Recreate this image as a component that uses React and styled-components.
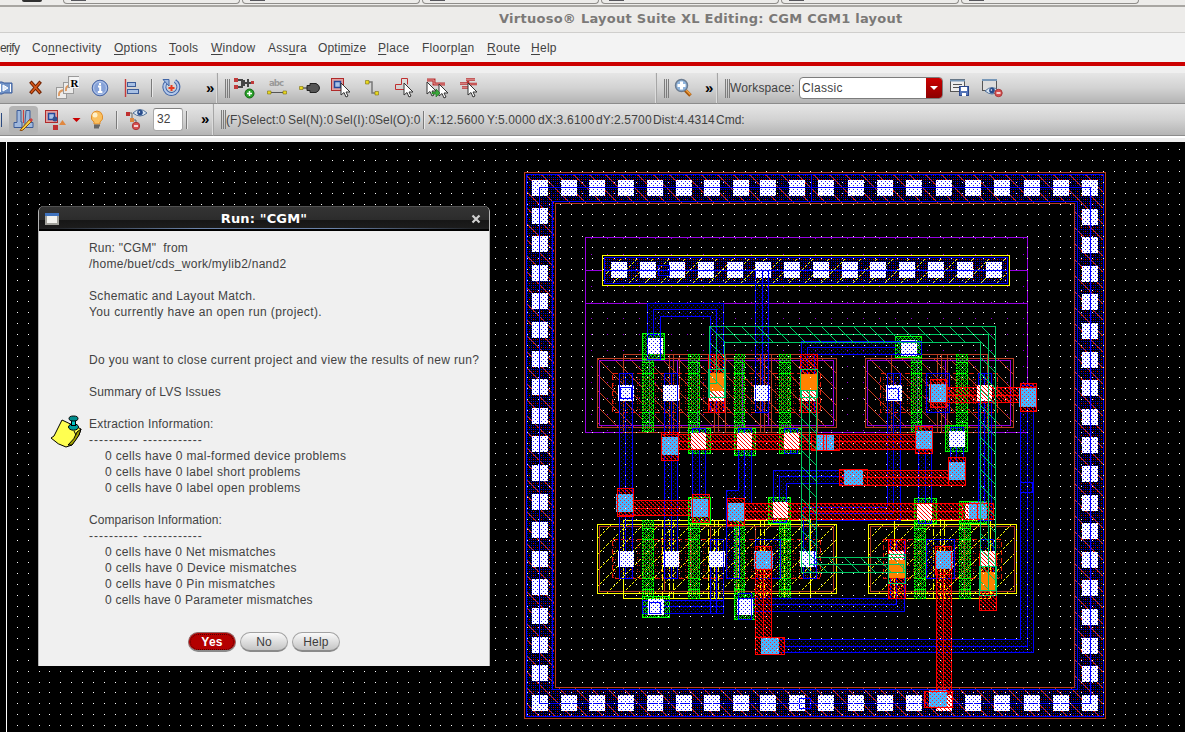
import React from 'react';
import styled, { createGlobalStyle, css } from 'styled-components';

const Global = createGlobalStyle`
  html, body { margin: 0; padding: 0; overflow: hidden; background: #000; }
  * { box-sizing: border-box; }
`;

const Screen = styled.div`
  position: relative;
  width: 1185px;
  height: 732px;
  overflow: hidden;
  display: flex;
  flex-direction: column;
  font: 12px/16px 'Liberation Sans', Arial, sans-serif;
  color: #424242;
  background: #f0f0f0;
`;

const Taskbar = styled.div`
  height: 7px;
  display: flex;
  gap: 2px;
  flex: none;
  background: #edecea;
  border-bottom: 2px solid #a8a6a2;
`;
const TaskTab = styled.div`
  width: ${p => p.$w}px;
  height: 4px;
  flex: none;
  border: 1px solid #8f8d8a;
  border-top: 0;
  border-radius: 0 0 4px 4px;
  padding-left: 7px;
`;
const TaskGlyph = styled.div`
  width: 15px;
  height: 1px;
  background: #56565c;
`;
const TaskGrip = styled.div`
  width: 61px;
  height: 3px;
  flex: none;
  padding-left: 22px;
`;
const TaskMark = styled.div`
  width: 20px;
  height: 2px;
  background: #303030;
  border-radius: 0 0 3px 3px;
`;

const TitleBar = styled.div`
  height: 26px;
  flex: none;
  background: #edecea;
  border-bottom: 1px solid #cfcecc;
  padding-left: 499px;
  font: bold 13px/24px 'DejaVu Sans', sans-serif;
  letter-spacing: 0.26px;
  color: #7b7977;
  white-space: pre;
`;

const MenuBar = styled.nav`
  height: 29px;
  flex: none;
  display: flex;
  align-items: center;
  background: #f3f3f3;
  overflow: hidden;
`;
const MenuItem = styled.span`
  width: ${p => p.$w}px;
  flex: none;
  white-space: nowrap;
  letter-spacing: ${p => p.$ls ?? 0.27}px;
  u { text-decoration-thickness: 1px; text-underline-offset: 2px; text-decoration-skip-ink: none; }
`;
const RedRule = styled.div`
  height: 4px;
  flex: none;
  background: #cc0000;
`;

const ToolRow = styled.div`
  height: ${p => p.$h}px;
  flex: none;
  display: flex;
`;
const barFill = css`
  background: linear-gradient(#e6e6e6, #d2d2d2 50%, #b4b4b4);
  border-bottom: 1px solid #8c8c8c;
`;
const ToolSection = styled.div`
  ${barFill}
  width: ${p => (p.$w ? `${p.$w}px` : 'auto')};
  flex: ${p => (p.$w ? 'none' : 1)};
  display: flex;
  align-items: center;
  border-right: ${p => (p.$w ? '1px solid #a6a6a6' : 0)};
  box-shadow: ${p => (p.$w ? 'inset -1px 0 #dcdcdc' : 'none')};
  overflow: hidden;
`;
const Spacer = styled.div`
  height: ${p => p.$h}px;
  flex: none;
  background: ${p => p.$bg || '#f0f0f0'};
`;
const Icon = styled.svg`
  flex: none;
  display: block;
  margin-left: ${p => p.$ml || 0}px;
`;
const Grip = styled.div`
  flex: none;
  width: 5px;
  height: 19px;
  margin-left: 7px;
  border-left: 1px solid #7c7c7c;
  border-right: 1px solid #7c7c7c;
  background: linear-gradient(90deg, transparent 1px, #7c7c7c 1px, #7c7c7c 2px, transparent 2px);
`;
const Rule = styled.div`
  flex: none;
  width: 2px;
  height: 18px;
  margin-left: ${p => p.$ml}px;
  background: #7a7a7a;
  border-right: 1px solid #e8e8e8;
`;
const More = styled.span`
  flex: none;
  width: 10px;
  margin-left: ${p => p.$ml}px;
  padding-bottom: 2px;
  font: bold 15px/17px 'Liberation Sans', sans-serif;
  color: #000;
`;
const Status = styled.span`
  flex: none;
  width: ${p => p.$w}px;
  letter-spacing: ${p => p.$ls || 0}px;
  margin-left: ${p => p.$ml || 0}px;
  white-space: nowrap;
`;
const Toggle = styled.div`
  flex: none;
  width: 29px;
  height: 28px;
  margin-left: 7px;
  border-radius: 4px;
  background: #b4b4b4;
  display: flex;
  align-items: center;
  justify-content: center;
`;
const LeftBar = styled.div`
  flex: none;
  width: 1px;
  height: 14px;
  margin-left: 1px;
  background: #2c4a80;
`;
const NumberBox = styled.div`
  flex: none;
  width: 30px;
  height: 23px;
  margin-left: 4px;
  padding-left: 3px;
  border: 1px solid #a8a8a8;
  border-top-color: #808080;
  border-radius: 3px;
  background: #fff;
  line-height: 21px;
`;
const Combo = styled.div`
  flex: none;
  width: 144px;
  height: 22px;
  margin-left: 4px;
  display: flex;
  border: 1px solid #7c7c7c;
  border-radius: 4px;
  background: #fff;
  overflow: hidden;
`;
const ComboText = styled.span`
  flex: 1;
  padding-left: 2px;
  line-height: 21px;
  letter-spacing: 0.3px;
`;
const ComboArrow = styled.div`
  width: 16px;
  display: flex;
  align-items: center;
  justify-content: center;
  background: linear-gradient(#cc0000, #8c0000);
`;

const Dialog = styled.section`
  position: absolute;
  left: 38px;
  top: 206px;
  width: 452px;
  height: 460px;
  display: flex;
  flex-direction: column;
  border-radius: 6px 6px 0 0;
  background: #f0f0f0;
  border: 1px solid #b4b4b4;
  border-top: 0;
  border-bottom: 0;
  overflow: hidden;
`;
const DialogTitle = styled.header`
  height: 25px;
  flex: none;
  display: flex;
  align-items: center;
  padding: 0 9px 0 7px;
  margin: 0 -1px;
  background: linear-gradient(#6b6b6b 0, #343434 1px, #2c2c2c 55%, #161616 56%, #1c1c1c 22px, transparent 22px, transparent 23px, #000 23px),
    linear-gradient(90deg, #1c1c1c, #6a82a8 35%, #6a82a8 65%, #1c1c1c);
`;
const DialogName = styled.div`
  flex: 1;
  text-align: center;
  font: bold 13px/20px 'DejaVu Sans', sans-serif;
  letter-spacing: 0.15px;
  padding-right: 2px;
  color: #fff;
`;
const DialogBody = styled.div`
  flex: 1;
  display: flex;
`;
const NoteColumn = styled.div`
  width: 50px;
  padding: 184px 0 0 11px;
  flex: none;
`;
const Message = styled.div`
  padding-top: 9px;
  flex: 1;
  display: flex;
  flex-direction: column;
`;
const Line = styled.div`
  height: 16px;
  line-height: 16px;
  white-space: pre;
  letter-spacing: ${p => p.$ls ?? 0.2}px;
  padding-left: ${p => (p.$in ? 16 : 0)}px;
`;
const Buttons = styled.div`
  display: flex;
  gap: 4px;
  height: 21px;
  margin: 24px 0 0 99px;
`;
const Button = styled.button`
  width: 48px;
  height: 20px;
  padding: 0;
  border: 1px solid ${p => (p.$main ? '#8f6b6b' : '#a2a2a2')};
  border-bottom: 2px solid #8a8a8a;
  border-radius: 10px;
  font: ${p => (p.$main ? 'bold' : 'normal')} 12px/16px 'Liberation Sans', sans-serif;
  letter-spacing: 0.2px;
  color: ${p => (p.$main ? '#fff' : '#3c3c3c')};
  background: ${p => (p.$main ? '#b40000' : 'linear-gradient(#fafafa, #c4c4c4)')};
  outline: ${p => (p.$main ? '1px dotted #500000' : 'none')};
  outline-offset: -3px;
`;

const Canvas = styled.main`
  flex: 1;
  background: #000;
  min-height: 0;
`;
const Drawing = styled.svg`
  display: block;
  shape-rendering: crispEdges;
`;

/* ---------- layout drawing ---------- */
const BLUE = '#0000ff', BROWN = '#b93c23', PURPLE = '#9600e1', TEAL = '#00c864';
const RED = '#ff0000', GREEN = '#00ff00', YELLOW = '#ffff00', SKY = '#46b4ff', ORANGE = '#ff8200';

const Box = ({ b, c, fill = 'none', dash }) => (
  <rect x={b[0] + 0.5} y={b[1] + 0.5} width={b[2] - b[0]} height={b[3] - b[1]} stroke={c} fill={fill} strokeDasharray={dash} />
);
const Fill = ({ b, fill }) => <rect x={b[0]} y={b[1]} width={b[2] - b[0]} height={b[3] - b[1]} fill={fill} />;
const V = ({ x, a, b, c, dash }) => <path d={`M${x + 0.5} ${a}V${b}`} stroke={c} strokeDasharray={dash} />;
const H = ({ y, a, b, c }) => <path d={`M${a} ${y + 0.5}H${b}`} stroke={c} />;

const Dots = ({ id, size, pts, c }) => (
  <pattern id={id} width={size} height={size} patternUnits="userSpaceOnUse">
    {pts.map(([x, y], i) => <rect key={i} x={x} y={y} width="1" height="1" fill={c} />)}
  </pattern>
);
const diag = (n, f, keep = () => true) =>
  Array.from({ length: n }, (_, i) => i).filter(keep).map(i => [i, f(i)]);

/* a routed segment: outline, stipple, and its centre line at m */
const Wire = ({ b, m, c = BLUE, fill = 'url(#blueDots)', vert }) => (
  <g>
    <Box b={b} c={c} fill={fill} />
    {vert ? <V x={m} a={b[1]} b={b[3]} c={c} /> : <H y={m} a={b[0]} b={b[2]} c={c} />}
  </g>
);
const Pad = ({ x, y, w = 16, h = 16, red }) => (
  <g>
    <rect x={x} y={y} width={w} height={h} fill="#fff" />
    <rect x={x} y={y} width={w} height={h} fill="url(#padDots)" />
    {red && <rect x={x} y={y} width={w} height={h} fill="url(#redHatch)" />}
  </g>
);
const Via = ({ r, p }) => (
  <g>
    <Box b={r} c={RED} fill="url(#redDots)" />
    <Fill b={p} fill={SKY} />
    <Fill b={p} fill="url(#redSparse)" />
    <Box b={r} c={RED} />
  </g>
);

const topX = [532, 561, 589, 618, 647, 676, 704, 733, 760, 789, 818, 848, 877, 906, 936, 965, 994, 1024, 1053, 1082];
const barX = [611, 640, 669, 698, 727, 755, 784, 813, 842, 870, 899, 928, 957, 986];
const gridDots = [];
for (let n = -3; n < 106; n++) for (let m = -2; m < 52; m++) gridDots.push([Math.floor(39 + 10.862 * n), Math.floor(171.45 + 10.864 * m)]);

const LayoutView = () => (
  <Drawing width="1185" height="590" viewBox="0 142 1185 590" fill="none" strokeWidth="1">
    <defs>
      <Dots id="blueDots" size={4} pts={[[1, 1], [3, 3]]} c="#0000c8" />
      <Dots id="ringBlue" size={4} pts={[[1, 1], [3, 3], [3, 1]]} c="#0000dc" />
      <Dots id="ringRed" size={8} pts={[[1, 3], [5, 7], [5, 3]]} c="#d20000" />
      <Dots id="padDots" size={4} pts={[[1, 1], [3, 3]]} c="#1414ff" />
      <Dots id="redDots" size={4} pts={[[0, 0], [1, 0], [2, 2], [3, 2], [1, 1], [3, 3]]} c="#e60000" />
      <Dots id="redSparse" size={4} pts={[[0, 0], [2, 2]]} c="#ff2828" />
      <Dots id="diffDots" size={6} pts={[[1, 1], [3, 1], [1, 5]]} c="#c81e0a" />
      <Dots id="redHatch" size={4} pts={[[0, 0], [1, 1], [2, 2], [3, 3]]} c="#ff0000" />
      <Dots id="greenDots" size={4} pts={[[1, 0], [3, 0], [0, 1], [1, 2], [3, 2], [2, 3]]} c="#00f000" />
      <Dots id="brownHatch" size={16} pts={diag(16, i => (i + 1) % 16)} c="#c83c1e" />
      <Dots id="tealHatch" size={16} pts={diag(16, i => (i + 1) % 16)} c={TEAL} />
      <Dots id="yellowHatch" size={16} pts={diag(16, i => 15 - i, i => i % 3 !== 1)} c={YELLOW} />
      <Dots id="wellDots" size={16} pts={[[15, 14]]} c="#9600e1" />
    </defs>

    {['url(#ringBlue)', 'url(#ringRed)', 'url(#brownHatch)'].map(f => (
      <path key={f} fillRule="evenodd" fill={f} d="M526 174H1104V717H526ZM554 203V688H1075V203Z" />
    ))}
    <Fill b={[586, 238, 1027, 432]} fill="url(#wellDots)" />
    <Box b={[524, 172, 1105, 718]} c={BROWN} />
    <Box b={[555, 203, 1074, 687]} c={BROWN} />
    <Box b={[526, 174, 1103, 716]} c={BLUE} />
    <Box b={[552, 201, 1077, 689]} c={BLUE} />
    {topX.map(x => <g key={x}><Pad x={x} y={180} /><Pad x={x} y={695} /></g>)}
    {Array.from({ length: 17 }, (_, i) => i + 1).map(i => (
      <g key={i}><Pad x={532} y={Math.floor(180 + 28.6 * i - 0.6)} /><Pad x={1082} y={Math.round(180 + 28.6 * i)} /></g>
    ))}
    <Box b={[539, 187, 1090, 703]} c={BLUE} />
    <V x={811} a={174} b={202} c={BLUE} />
    <Box b={[799, 698, 810, 708]} c={BLUE} />

    <Box b={[585, 237, 1027, 432]} c={PURPLE} />
    <H y={303} a={585} b={1027} c={PURPLE} />
    <H y={270} a={585} b={1027} c={PURPLE} />
    <Box b={[602, 255, 1009, 285]} c={YELLOW} fill="#000" />
    <Fill b={[604, 257, 1008, 284]} fill="url(#ringBlue)" />
    <Fill b={[604, 257, 1008, 284]} fill="url(#ringRed)" />
    <Fill b={[604, 257, 1008, 284]} fill="url(#yellowHatch)" />
    <Box b={[604, 257, 1007, 283]} c={BLUE} />
    {barX.map(x => <Pad key={x} x={x} y={262} />)}
    <H y={270} a={604} b={1008} c={BLUE} />
    <Box b={[658, 265, 669, 275]} c={BLUE} />

    {/* wells and diffusions */}
    {[[597, 836, 599, 833, 623, 817], [865, 1013, 867, 1010, 891, 987]].map(([a, b, c, d, e, f]) => (
      <g key={a}>
        <Box b={[a, 358, b, 427]} c={BROWN} fill="url(#brownHatch)" />
        <Box b={[c, 360, d, 425]} c={PURPLE} />
        <Box b={[e, 354, f, 432]} c={BROWN} />
      </g>
    ))}
    {[669, 673, 679, 714, 718, 725, 760, 764, 771, 937, 941, 947].map(x => <V key={x} x={x} a={354} b={432} c={BROWN} />)}
    {[649, 677, 697, 742, 768, 917, 945].map(x => <V key={x} x={x} a={360} b={426} c={PURPLE} />)}
    <Box b={[612, 373, 820, 412]} c="#e61e0a" fill="url(#diffDots)" dash="5 3" />
    <Box b={[880, 373, 997, 412]} c="#e61e0a" fill="url(#diffDots)" dash="5 3" />

    {[[597, 836, 599, 833, 623, 810], [868, 1016, 870, 1014, 894, 990]].map(([a, b, c, d, e, f]) => (
      <g key={a}>
        <Box b={[a, 524, b, 593]} c={YELLOW} fill="url(#yellowHatch)" />
        <Box b={[c, 526, d, 591]} c={BROWN} />
        <Box b={[e, 520, f, 598]} c={YELLOW} />
      </g>
    ))}
    {[662, 669, 673, 708, 714, 718, 738, 760, 764, 784, 933, 940, 944].map(x => <V key={x} x={x} a={520} b={598} c={YELLOW} dash="7 2" />)}
    {[664, 690, 710, 736, 755, 964].map(x => <V key={x} x={x} a={526} b={592} c={BROWN} />)}
    <Box b={[612, 539, 820, 578]} c="#e61e0a" fill="url(#diffDots)" dash="5 3" />
    <Box b={[883, 539, 1001, 578]} c="#e61e0a" fill="url(#diffDots)" dash="5 3" />

    {/* poly */}
    {[[642, 653], [688, 699], [734, 744], [779, 790], [911, 921], [956, 967]].map(([a, b]) => (
      <g key={a}>
        <Box b={[a, 354, b, 431]} c={GREEN} fill="url(#greenDots)" dash="2 1" />
        {[362, 373, 412, 422].map(y => <H key={y} y={y} a={a} b={b} c={GREEN} />)}
      </g>
    ))}
    {[[642, 653], [688, 699], [734, 744], [779, 790], [914, 925], [959, 970]].map(([a, b]) => (
      <g key={a}>
        <Box b={[a, 520, b, 598]} c={GREEN} fill="url(#greenDots)" dash="2 1" />
        {[528, 539, 578, 589].map(y => <H key={y} y={y} a={a} b={b} c={GREEN} />)}
      </g>
    ))}
    {[[642, 333, 664, 359], [895, 336, 921, 357], [688, 428, 710, 453], [734, 428, 755, 455], [779, 428, 801, 453], [945, 425, 967, 451],
      [688, 497, 710, 523], [768, 497, 790, 523], [914, 498, 936, 523], [959, 501, 986, 523], [642, 596, 669, 617], [734, 593, 755, 619]].map(b => (
      <Box key={b.join()} b={b} c={GREEN} fill="url(#greenDots)" />
    ))}

    {/* first metal */}
    <path fill="url(#blueDots)" stroke={BLUE} d="M647.5 359.5V303.5H723.5V412.5H710.5V316.5H660.5V359.5Z" />
    <path stroke={BLUE} d="M653.5 340V309.5H716.5V412" />
    <Wire vert m={762} b={[755, 270, 768, 412]} />
    <path fill="url(#blueDots)" stroke={BLUE} d="M921.5 341.5H801.5V412.5H814.5V354.5H921.5Z" />
    <path stroke={BLUE} d="M895 347.5H807.5V412" />
    <Wire vert m={625} b={[619, 373, 632, 578]} />
    <Wire vert m={671} b={[664, 373, 677, 578]} />
    <Wire vert m={699} b={[692, 428, 705, 522]} />
    <Wire vert m={790} b={[784, 428, 797, 453]} />
    <path fill="url(#blueDots)" stroke={BLUE} d="M738.5 428.5H751.5V503.5H739.5V578.5H726.5V490.5H738.5Z" />
    <V x={744} a={428} b={500} c={BLUE} />
    <path fill="url(#blueDots)" stroke={BLUE} d="M773.5 522.5V470.5H848.5V483.5H786.5V522.5Z" />
    <path stroke={BLUE} d="M779.5 500V476.5H848" />
    <path fill="url(#blueDots)" stroke={BLUE} d="M887.5 373.5H900.5V520.5H816.5V578.5H803.5V507.5H887.5Z" />
    <path stroke={BLUE} d="M893.5 373V513.5H809.5" />
    <Wire vert m={925} b={[918, 426, 931, 523]} />
    <Wire vert m={956} b={[950, 427, 963, 478]} />
    <Wire vert m={984} b={[978, 373, 991, 520]} />
    <Box b={[926, 373, 949, 412]} c={BLUE} fill="url(#blueDots)" />
    <Box b={[926, 539, 954, 578]} c={BLUE} fill="url(#blueDots)" />
    <Box b={[980, 539, 993, 578]} c={BLUE} fill="url(#blueDots)" />
    <Wire vert m={716} b={[710, 539, 723, 613]} />
    <Wire m={606} b={[642, 600, 723, 613]} />
    <path fill="url(#blueDots)" stroke={BLUE} d="M738.5 598.5H890.5V539.5H904.5V611.5H738.5Z" />
    <path stroke={BLUE} d="M738 604.5H896.5V540" />
    <Box b={[755, 539, 780, 578]} c={BLUE} fill="url(#blueDots)" />
    <path fill="url(#blueDots)" stroke={BLUE} d="M762.5 639.5H1020.5V385.5H1033.5V652.5H762.5Z" />
    <path stroke={BLUE} d="M762 646.5H1027.5V385" />
    <Box b={[1020, 482, 1032, 492]} c={BLUE} />

    {/* contact pads */}
    {[[647, 338], [901, 340], [618, 385], [663, 385], [754, 385], [886, 385], [949, 431], [618, 551], [663, 551], [709, 551], [800, 551], [648, 599], [737, 599]].map(([x, y]) => (
      <Pad key={x + '-' + y} x={x} y={y} />
    ))}
    {[619, 632, 677, 755, 768, 887].map(x => <V key={x} x={x} a={385} b={401} c={BLUE} />)}
    {[619, 664, 723, 801, 814].map(x => <V key={x} x={x} a={551} b={567} c={BLUE} />)}
    {[[620, 387, 631, 398], [887, 388, 898, 399], [649, 602, 660, 613], [738, 593, 751, 619], [647, 334, 660, 359]].map(b => (
      <Box key={b.join()} b={b} c={BLUE} />
    ))}
    <H y={341} a={895} b={921} c={BLUE} />
    <H y={354} a={895} b={921} c={BLUE} />

    {/* second metal */}
    {[[664, 434, 931, 449, 441], [932, 387, 1035, 402, 395], [839, 470, 965, 485, 477], [619, 500, 708, 515, 508], [727, 503, 993, 519, 511]].map(b => (
      <Wire key={b.join()} b={b} m={b[4]} c={RED} fill="url(#redDots)" />
    ))}
    {[[691, 433], [737, 433], [784, 433], [977, 385], [773, 502], [917, 504], [965, 503]].map(([x, y]) => (
      <Pad key={x + '-' + y} x={x} y={y} w={15} red />
    ))}
    <Wire vert m={763} b={[755, 569, 771, 654]} c={RED} fill="url(#redDots)" />
    <Wire vert m={943} b={[936, 565, 951, 698]} c={RED} fill="url(#redDots)" />
    <Via r={[661, 432, 678, 460]} p={[662, 437, 678, 455]} />
    <Via r={[915, 426, 932, 453]} p={[916, 431, 932, 449]} />
    <Via r={[811, 434, 839, 450]} p={[816, 434, 834, 450]} />
    <V x={823} a={434} b={450} c={RED} />
    <V x={826} a={434} b={450} c={RED} />
    <Via r={[930, 379, 946, 407]} p={[929, 384, 946, 402]} />
    <Via r={[1020, 383, 1036, 411]} p={[1019, 388, 1036, 407]} />
    <Via r={[839, 469, 867, 485]} p={[844, 470, 863, 486]} />
    <Via r={[948, 457, 965, 485]} p={[949, 462, 966, 480]} />
    <Via r={[617, 488, 633, 516]} p={[616, 494, 634, 512]} />
    <Via r={[692, 494, 709, 522]} p={[691, 499, 708, 517]} />
    <Via r={[727, 498, 744, 525]} p={[727, 503, 744, 521]} />
    <Via r={[962, 503, 993, 519]} p={[969, 502, 987, 519]} />
    <V x={977} a={503} b={519} c={RED} />
    <Via r={[755, 546, 771, 574]} p={[754, 551, 773, 569]} />
    <Via r={[755, 637, 784, 654]} p={[761, 638, 779, 654]} />
    <Via r={[935, 546, 951, 574]} p={[936, 551, 953, 569]} />
    <Pad x={936} y={695} red />
    <Via r={[924, 691, 952, 707]} p={[929, 690, 947, 707]} />

    {[[708, 354, 724, 412, 391, 401, 373, 391], [800, 354, 817, 412, 391, 401, 374, 390], [888, 539, 905, 598, 551, 560, 560, 578], [979, 553, 996, 610, 551, 567, 572, 590]].map(r => (
      <g key={r[0]}>
        <Box b={r.slice(0, 4)} c={RED} fill="url(#redDots)" />
        <Pad x={r[0] + 1} y={r[4]} w={15} h={r[5] - r[4]} red />
        <Fill b={[r[0] + 1, r[6], r[2], r[7]]} fill={ORANGE} />
      </g>
    ))}

    {/* third metal */}
    <path fill="url(#tealHatch)" stroke={TEAL} d="M709.5 397.5V326.5H995.5V590.5H980.5V342.5H724.5V397.5Z" />
    <path stroke={TEAL} d="M709 383.5H716.5V334.5H988.5V590" />
    <path fill="url(#tealHatch)" stroke={TEAL} d="M801.5 390.5H816.5V557.5H905.5V572.5H801.5Z" />
    <path stroke={TEAL} d="M809.5 390V564.5H903.5V572" />
    {[[708, 369, 725, 397], [800, 369, 817, 397], [888, 554, 905, 583], [979, 566, 996, 595]].map(b => <Box key={b.join()} b={b} c={TEAL} />)}

    <path fill="#fff" d={gridDots.map(([x, y]) => `M${x} ${y}h1v1h-1z`).join('')} />
    <rect x="0" y="142" width="6" height="590" fill="#000" />
    <rect x="6" y="142" width="1" height="590" fill="#fff" />
  </Drawing>
);

/* ---------- toolbar icons ---------- */
const Cursor = ({ x, y }) => (
  <path transform={`translate(${x} ${y})`} d="M0 0V12L3 9.5L5 14L7 13L5 9H9Z" fill="#fff" stroke="#333" strokeWidth="1" />
);
const BluePad = ({ x, y }) => (
  <g transform={`translate(${x} ${y})`}>
    <rect x=".5" y=".5" width="12" height="12" fill="#e0a0a0" stroke="#b02a2a" />
    <rect x="3.5" y="3.5" width="6" height="6" fill="#a8c2e8" stroke="#24489a" strokeWidth="1.5" />
  </g>
);
const Eye = ({ x, y }) => (
  <g transform={`translate(${x} ${y})`}>
    <path d="M0 4Q7-3 14 4Q7 10 0 4Z" fill="#d8e4f2" stroke="#54749c" />
    <circle cx="7" cy="3.6" r="2.8" fill="#284c8c" /><circle cx="6.4" cy="3" r=".8" fill="#fff" />
  </g>
);
const Minus = ({ x, y }) => (
  <g><circle cx={x} cy={y} r="3.7" fill="#d65050" stroke="#a83838" /><path d={`M${x - 2} ${y}h4`} stroke="#fff" strokeWidth="1.5" /></g>
);

const FirstRow = () => (
  <ToolRow $h={31}>
    <ToolSection $w={218}>
      <Icon width="13" height="16" viewBox="0 0 13 16"><path d="M-4 2H2L4 3H12V13H4L2 14H-4Z" fill="#7294c8" stroke="#3a5c9c" /><path d="M0.500 4V12M3 5V11L8 8ZM10.500 4V12" stroke="#fff" fill="#dce8f8" /></Icon>
      <Icon $ml={15} width="15" height="16" viewBox="0 0 15 16"><path d="M3.500 3L11.500 12M11.500 3L3.500 12" stroke="#6c2000" strokeWidth="3.400" strokeLinecap="square" /><path d="M3.500 3L11.500 12M11.500 3L3.500 12" stroke="#d4571a" strokeWidth="1.600" strokeLinecap="square" /></Icon>
      <Icon $ml={13} width="25" height="26" viewBox="0 0 25 26">
        {[[0, 12], [7, 7], [12, 1]].map(([x, y]) => <g key={x}><rect x={x + 0.5} y={y + 0.5} width="10" height="11" fill="#ecebea" stroke="#9a9a9a" /><path d={`M${x + 3} ${y + 9}Q${x + 2} ${y + 4} ${x + 8} ${y + 3}`} stroke="#dc9860" strokeWidth="2" fill="none" /></g>)}
        <rect x="14" y="2" width="9" height="11" fill="#f4f4f4" /><text x="14.500" y="11.500" fontSize="11" fontWeight="bold" fontFamily="Liberation Serif">R</text>
      </Icon>
      <Icon $ml={10} width="18" height="18" viewBox="0 0 18 18"><circle cx="9" cy="9" r="7.8" fill="#86a2d8" stroke="#4664a4" /><circle cx="9" cy="9" r="6.4" fill="none" stroke="#b8cbee" /><path d="M9 4v2M7 7.500h2.200v5M6.800 13h4.600" stroke="#fff" strokeWidth="2" fill="none" /></Icon>
      <Icon $ml={15} width="17" height="20" viewBox="0 0 17 20"><path d="M1.500 1V19" stroke="#c43c3c" strokeWidth="1.4" /><rect x="3.500" y="4.500" width="8" height="4" fill="#a8c0e4" stroke="#3c5c98" /><rect x="3.500" y="11.500" width="11" height="4" fill="#a8c0e4" stroke="#3c5c98" /></Icon>
      <Rule $ml={10} />
      <Icon $ml={9} width="19" height="20" viewBox="0 0 19 20"><path d="M4 4.500A7 7 0 1 0 13 3" stroke="#3f64a6" strokeWidth="4" fill="none" /><path d="M4 4.500A7 7 0 1 0 13 3" stroke="#b4c8ea" strokeWidth="2" fill="none" /><path d="M1 1.500H7V8Z" fill="#a0bae2" stroke="#3f64a6" /><path d="M9.500 7v6M6.500 10h6" stroke="#e83c20" strokeWidth="2" /></Icon>
      <More $ml={25}>»</More>
    </ToolSection>
    <ToolSection $w={439}>
      <Grip />
      <Icon $ml={4} width="21" height="22" viewBox="0 0 21 22"><path d="M4 3H8V10H4M14 2V10M14 6H19M10 3V9M10 6H14" stroke="#444" strokeWidth="2" fill="none" /><path d="M0 1h4v4H0zM0 8h4v4H0zM17 4h3v3h-3z" fill="#c03a3a" /><circle cx="15.500" cy="16.500" r="4.500" fill="#28a028" stroke="#126612" /><path d="M15.500 14v5M13 16.500h5" stroke="#fff" strokeWidth="1.500" /></Icon>
      <Icon $ml={12} width="21" height="20" viewBox="0 0 21 20"><text x="2" y="8" fontSize="8.500" fontWeight="bold" fontFamily="DejaVu Sans" fill="#999" textLength="15">abc</text><path d="M2 14.500H18" stroke="#555" /><path d="M.5 13h3.500v3H.5zM16 13h3.500v3h-3.500z" fill="#e8d820" stroke="#7c7010" strokeWidth=".6" /></Icon>
      <Icon $ml={11} width="22" height="14" viewBox="0 0 22 14"><path d="M2 7H8" stroke="#222" /><path d="M0.500 5.500h3.500v3h-3.500z" fill="#e8d820" stroke="#7c7010" strokeWidth=".6" /><path d="M8 4.500H11V2.500H17Q20.500 4 20.500 7Q20.500 10 17 11.500H11V9.500H8Z" fill="#555" stroke="#222" /></Icon>
      <Icon $ml={10} width="20" height="22" viewBox="0 0 20 22"><BluePad x={0} y={1} /><Cursor x={10} y={6} /></Icon>
      <Icon $ml={14} width="15" height="18" viewBox="0 0 15 18"><path d="M3 3H7V14H12" stroke="#777" strokeWidth="1.500" fill="none" /><path d="M.5 1.500h3.500v3.500H.5zM10 12.500h3.500v3.500H10z" fill="#e8d820" stroke="#7c7010" strokeWidth=".6" /></Icon>
      <Icon $ml={15} width="19" height="22" viewBox="0 0 19 22"><path d="M.5 12.500V7.500H6.500V1.500H12.500V7.500M.5 12.500H10" stroke="#c03030" fill="none" /><Cursor x={9} y={6} /></Icon>
      <Icon $ml={12} width="22" height="22" viewBox="0 0 22 22"><path d="M1 3H8V7H19" stroke="#b83030" strokeWidth="3" fill="none" /><path d="M1 3H8V7H19" stroke="#e09090" fill="none" /><Cursor x={1} y={5} /><Cursor x={13} y={7} /><path d="M6 15H10V12L14 16L10 20V17H6Z" fill="#3ca83c" stroke="#1a701a" strokeWidth=".6" /></Icon>
      <Icon $ml={12} width="19" height="22" viewBox="0 0 19 22"><path d="M6 2.500H15M0 6.500H8V4M2 10.500H10V7H17" stroke="#b83030" strokeWidth="2.600" fill="none" /><path d="M6 2.500H15M0 6.500H8M2 10.500H10V7H17" stroke="#e09090" strokeWidth=".8" fill="none" /><Cursor x={8} y={6} /></Icon>
    </ToolSection>
    <ToolSection $w={61}>
      <Grip />
      <Icon $ml={5} width="20" height="20" viewBox="0 0 20 20"><path d="M11 12L16.500 17.500" stroke="#a8580c" strokeWidth="3.600" /><path d="M12 12L16.500 16.500" stroke="#f0a040" strokeWidth="1.500" /><circle cx="7.500" cy="7.500" r="6" fill="#8fb4dc" stroke="#6c7c90" strokeWidth="1.500" /><path d="M7.500 3.500v8M3.500 7.500h8" stroke="#fff" strokeWidth="3" /></Icon>
      <More $ml={11}>»</More>
    </ToolSection>
    <ToolSection>
      <Grip />
      <Status $w={65} $ls={0.15}>Workspace:</Status>
      <Combo>
        <ComboText>Classic</ComboText>
        <ComboArrow><svg width="8" height="5"><path d="M0 0H8L4 4Z" fill="#fff" /></svg></ComboArrow>
      </Combo>
      <Icon $ml={7} width="20" height="20" viewBox="0 0 20 20"><rect x=".5" y="1.500" width="14" height="12" fill="#eee" stroke="#555" /><path d="M0 2.500H15" stroke="#7898b8" strokeWidth="2" /><path d="M3 6.500H12M3 9.500H9" stroke="#555" /><rect x="9.500" y="8.500" width="9" height="9" fill="#5474b8" stroke="#2c488c" /><path d="M11 9h6v4h-6zM12 15h4v3h-4z" fill="#fff" /></Icon>
      <Icon $ml={12} width="22" height="20" viewBox="0 0 22 20"><rect x=".5" y="1.500" width="14" height="11" fill="#ddd" stroke="#555" /><path d="M0 2H15" stroke="#7898b8" strokeWidth="2" /><Eye x={3} y={9} /><Minus x={16.5} y={15} /></Icon>
    </ToolSection>
  </ToolRow>
);

const SecondRow = () => (
  <ToolRow $h={32}>
    <ToolSection $w={214}>
      <LeftBar />
      <Toggle>
        <svg width="22" height="22" viewBox="0 0 22 22"><path d="M4 1.500H8V13H9V18.500H1V13.500H4ZM13 1.500H17V13.500H20V18.500H12V13Z" fill="#a0b8dc" stroke="#3c5c98" /><path d="M10.500 1V14" stroke="#d04040" /><path d="M8 20L17 10L19 12L10 21L7 22Z" fill="#f4d040" stroke="#8c4c10" /><path d="M17 10L19 12" stroke="#d04040" strokeWidth="3" /></svg>
      </Toggle>
      <Icon $ml={7} width="22" height="22" viewBox="0 0 22 22"><BluePad x={0} y={1} /><circle cx="10" cy="10" r="2.500" fill="#305090" /><path d="M8 16h5v5H8z" fill="#c03030" /><path d="M14 16L17.500 11L21 16Z" fill="#e08840" /></Icon>
      <Icon $ml={5} width="9" height="6" viewBox="0 0 9 6"><path d="M.5 1H8.500L4.500 5Z" fill="#c80000" /></Icon>
      <Icon $ml={9} width="14" height="20" viewBox="0 0 14 20"><path d="M7 1A6 6 0 0 1 10 12V14H4V12A6 6 0 0 1 7 1Z" fill="#fac060" stroke="#e08c28" /><circle cx="5" cy="5" r="2.500" fill="#fff0c8" /><path d="M4 15.500H10M4 17.500H9" stroke="#666" strokeWidth="2" /></Icon>
      <Rule $ml={12} />
      <Icon $ml={7} width="24" height="24" viewBox="0 0 24 24"><path d="M3 5H7V12M8 12H11V18" stroke="#666" fill="none" /><path d="M1 4h4v4H1z" fill="#c03030" /><path d="M5 10h4v4H5z" fill="#e08840" /><Eye x={8} y={1} /><Minus x={11} y={18} /></Icon>
      <NumberBox>32</NumberBox>
      <Rule $ml={3} />
      <More $ml={13}>»</More>
    </ToolSection>
    <ToolSection>
      <Grip />
      <Status $w={62} $ls={0.08}>(F)Select:0</Status>
      <Status $w={47} $ls={0.2}>Sel(N):0</Status>
      <Status $w={40} $ls={0.2}>Sel(I):0</Status>
      <Status $w={46} $ls={0.1}>Sel(O):0</Status>
      <Rule $ml={2} />
      <Status $w={59} $ml={3} $ls={0.2}>X:12.5600</Status>
      <Status $w={51} $ls={0.15}>Y:5.0000</Status>
      <Status $w={58} $ls={0.2}>dX:3.6100</Status>
      <Status $w={57} $ls={0.2}>dY:2.5700</Status>
      <Status $w={63} $ls={0.1}>Dist:4.4314</Status>
      <Status $w={30}>Cmd:</Status>
    </ToolSection>
  </ToolRow>
);

const lines = [
  ['Run: "CGM"  from'], ['/home/buet/cds_work/mylib2/nand2', 0, 0.27], [''], ['Schematic and Layout Match.', 0, 0.33],
  ['You currently have an open run (project).', 0, 0.39],
  [''], [''], ['Do you want to close current project and view the results of new run?', 0, 0.34], [''], ['Summary of LVS Issues'], [''],
  ['Extraction Information:'], ['---------- ------------', 0, 0.98], ['0 cells have 0 mal-formed device problems', 1, 0.32],
  ['0 cells have 0 label short problems', 1, 0.31], ['0 cells have 0 label open problems', 1, 0.32], [''],
  ['Comparison Information:', 0, 0.07], ['---------- ------------', 0, 0.98], ['0 cells have 0 Net mismatches', 1, 0.28],
  ['0 cells have 0 Device mismatches', 1, 0.35], ['0 cells have 0 Pin mismatches', 1, 0.31], ['0 cells have 0 Parameter mismatches', 1, 0.22],
];

export default function App() {
  return (
    <>
      <Global />
      <Screen>
        <Taskbar>
          <TaskGrip><TaskMark /></TaskGrip>
          {[177, 178, 177, 178, 178, 178, 60].map((w, i) => <TaskTab key={i} $w={w}><TaskGlyph /></TaskTab>).slice(0, 6)}
        </Taskbar>
        <TitleBar>Virtuoso® Layout Suite XL Editing: CGM CGM1 layout</TitleBar>
        <MenuBar>
          <MenuItem $w={32} $ls={-0.7}>er<u>i</u>fy</MenuItem>
          <MenuItem $w={82} $ls={0.35}>Co<u>n</u>nectivity</MenuItem>
          <MenuItem $w={55}><u>O</u>ptions</MenuItem>
          <MenuItem $w={42}><u>T</u>ools</MenuItem>
          <MenuItem $w={57}><u>W</u>indow</MenuItem>
          <MenuItem $w={50}>Ass<u>u</u>ra</MenuItem>
          <MenuItem $w={60} $ls={0.1}>Opti<u>m</u>ize</MenuItem>
          <MenuItem $w={44}><u>P</u>lace</MenuItem>
          <MenuItem $w={65}>Floorpl<u>a</u>n</MenuItem>
          <MenuItem $w={44}><u>R</u>oute</MenuItem>
          <MenuItem $w={40}><u>H</u>elp</MenuItem>
        </MenuBar>
        <RedRule />
        <Spacer $h={7} />
        <FirstRow />
        <SecondRow />
        <Spacer $h={2} $bg="#fff" />
        <Spacer $h={4} $bg="#eeeeee" />
        <Canvas><LayoutView /></Canvas>
        <Dialog>
          <DialogTitle>
            <svg width="14" height="12"><rect width="14" height="12" fill="#a0a09a" /><rect width="14" height="3" fill="#3f73be" /><rect x="2" y="3" width="10" height="7" fill="#f2f2ee" /></svg>
            <DialogName>Run: "CGM"</DialogName>
            <svg width="10" height="10"><path d="M1.500 1.500L8.500 8.500M8.500 1.500L1.500 8.500" stroke="#d0d0d0" strokeWidth="2.200" /></svg>
          </DialogTitle>
          <DialogBody>
            <NoteColumn>
              <svg width="33" height="34" viewBox="0 0 33 34">
                <path d="M1 23L4 21L12 5L31 14L29 20Q24 25 22 30L16 32Q8 30 1 23Z" fill="#ffff50" stroke="#000" />
                <path d="M31 14L29 20Q26 25 22 30H18Q25 24 27 17Z" fill="#a0a000" stroke="#000" />
                <ellipse cx="23.500" cy="12" rx="5" ry="3.200" fill="#00a0a0" stroke="#000" />
                <rect x="21.500" y="4.500" width="4" height="6" fill="#00c8c8" stroke="#000" />
                <ellipse cx="23.500" cy="3.500" rx="4.500" ry="2.500" fill="#008c8c" stroke="#000" />
                <path d="M24 16L26 20" stroke="#000" />
              </svg>
            </NoteColumn>
            <Message>
              {lines.map(([t, indent, ls], i) => <Line key={i} $in={indent} $ls={ls}>{t}</Line>)}
              <Buttons><Button $main>Yes</Button><Button>No</Button><Button>Help</Button></Buttons>
            </Message>
          </DialogBody>
        </Dialog>
      </Screen>
    </>
  );
}
